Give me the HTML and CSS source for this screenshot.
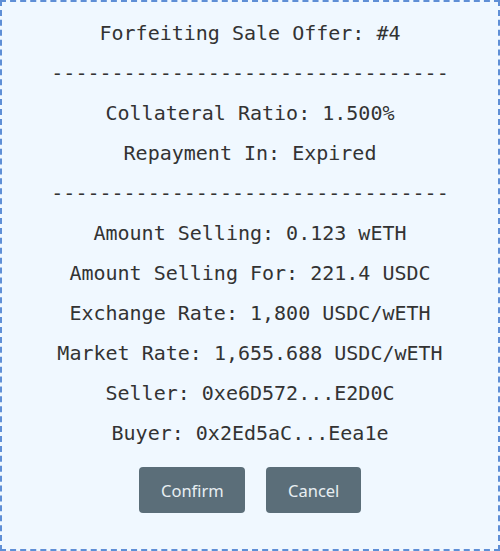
FILE: index.html
```html
<!DOCTYPE html>
<html>
<head>
<meta charset="utf-8">
<link rel="stylesheet" href="styles.css">
</head>
<body>
<div class="dialog">
  <div class="line">Forfeiting Sale Offer: #4</div>
  <div class="line">---------------------------------</div>
  <div class="line">Collateral Ratio: 1.500%</div>
  <div class="line">Repayment In: Expired</div>
  <div class="line">---------------------------------</div>
  <div class="line">Amount Selling: 0.123 wETH</div>
  <div class="line">Amount Selling For: 221.4 USDC</div>
  <div class="line">Exchange Rate: 1,800 USDC/wETH</div>
  <div class="line">Market Rate: 1,655.688 USDC/wETH</div>
  <div class="line">Seller: 0xe6D572...E2D0C</div>
  <div class="line">Buyer: 0x2Ed5aC...Eea1e</div>
  <div class="actions">
    <button class="btn btn-confirm">Confirm</button>
    <button class="btn btn-cancel">Cancel</button>
  </div>
</div>
</body>
</html>
```
FILE: styles.css
```css
html, body {
  margin: 0;
  padding: 0;
  background: #ffffff;
}
.dialog {
  box-sizing: border-box;
  width: 500px;
  height: 551px;
  border: 2px dashed #5f8fd6;
  background: #f0f8ff;
  padding-top: 11px;
  display: flex;
  flex-direction: column;
  align-items: center;
}
.line {
  font-family: "DejaVu Sans Mono", monospace;
  font-size: 20px;
  line-height: 40px;
  color: #333333;
  white-space: pre;
  text-align: center;
}
.actions {
  display: flex;
  gap: 21px;
  margin-top: 14px;
}
.btn {
  font-family: "Noto Sans", sans-serif;
  font-size: 16.5px;
  height: 46px;
  padding: 0 22px;
  border: none;
  border-radius: 4px;
  background: #5b6e79;
  color: #e8eef2;
  cursor: pointer;
}
.btn-confirm {
  width: 106px;
}
.btn-cancel {
  width: 95px;
}
```
